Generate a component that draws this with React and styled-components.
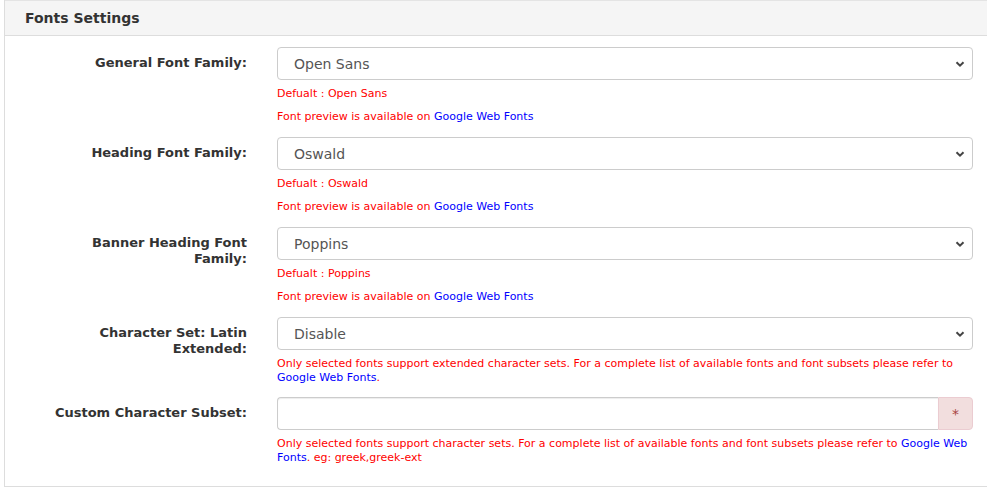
import React from 'react';
import styled, { createGlobalStyle } from 'styled-components';

const GlobalStyle = createGlobalStyle`
  html, body {
    margin: 0;
    padding: 0;
    background: #fff;
    font-family: "DejaVu Sans", Verdana, sans-serif;
  }
`;

const Page = styled.div`
  padding: 0 0 0 4px;
`;

const Panel = styled.div`
  border: 1px solid #ddd;
  border-right: none;
  border-top: none;
  height: 487px;
  box-sizing: border-box;
`;

const PanelHeading = styled.div`
  background: #f5f5f5;
  border-bottom: 1px solid #ddd;
  border-top: 1px solid #e4e4e4;
  height: 36px;
  box-sizing: border-box;
  padding: 0 20px;
  display: flex;
  align-items: center;
  font-size: 14px;
  font-weight: bold;
  color: #333;
`;

const PanelBody = styled.div`
  padding: 11px 14px 0 0;
`;

const Row = styled.div`
  display: grid;
  grid-template-columns: 242px 1fr;
  column-gap: 30px;
  margin-bottom: ${p => p.$gap || 13}px;
`;

const Label = styled.label`
  text-align: right;
  font-size: 13px;
  font-weight: bold;
  color: #333;
  line-height: 16px;
  padding: 8px 0 0 40px;
`;

const Field = styled.div`
  display: flex;
  flex-direction: column;
`;

const Select = styled.div`
  height: 33px;
  box-sizing: border-box;
  border: 1px solid #ccc;
  border-radius: 4px;
  display: flex;
  align-items: center;
  justify-content: space-between;
  padding: 0 6px 0 16px;
  font-size: 14px;
  color: #555;
`;

const InputGroup = styled.div`
  display: flex;
  height: 33px;
`;

const Input = styled.div`
  flex: 1;
  border: 1px solid #ccc;
  border-right: none;
  border-radius: 4px 0 0 4px;
  box-shadow: inset 0 1px 1px rgba(0, 0, 0, 0.075);
`;

const Addon = styled.div`
  width: 35px;
  box-sizing: border-box;
  background: #f2dede;
  border: 1px solid #ebccd1;
  border-radius: 0 4px 4px 0;
  color: #a94442;
  font-size: 14px;
  display: flex;
  align-items: center;
  justify-content: center;
`;

const Help = styled.p`
  margin: ${p => p.$top || 7}px 0 0;
  font-size: 11px;
  line-height: 14px;
  color: #f00;
`;

const Link = styled.a`
  color: #00f;
  text-decoration: none;
`;

const Chevron = () => (
  <svg width="12" height="12" viewBox="0 0 12 12">
    <path d="M2.5 4.2 L6 7.7 L9.5 4.2" fill="none" stroke="#444" strokeWidth="2" />
  </svg>
);

const fonts = [
  { label: 'General Font Family:', value: 'Open Sans' },
  { label: 'Heading Font Family:', value: 'Oswald' },
  { label: 'Banner Heading Font Family:', value: 'Poppins' },
];

const App = () => (
  <>
    <GlobalStyle />
    <Page>
      <Panel>
        <PanelHeading>Fonts Settings</PanelHeading>
        <PanelBody>
          {fonts.map(f => (
            <Row key={f.label}>
              <Label>{f.label}</Label>
              <Field>
                <Select>
                  {f.value}
                  <Chevron />
                </Select>
                <Help>Defualt : {f.value}</Help>
                <Help $top={9}>
                  Font preview is available on <Link>Google Web Fonts</Link>
                </Help>
              </Field>
            </Row>
          ))}
          <Row $gap={12}>
            <Label>Character Set: Latin Extended:</Label>
            <Field>
              <Select>
                Disable
                <Chevron />
              </Select>
              <Help>
                Only selected fonts support extended character sets. For a complete list of available fonts and font subsets please refer to{' '}
                <Link>Google Web Fonts</Link>.
              </Help>
            </Field>
          </Row>
          <Row>
            <Label>Custom Character Subset:</Label>
            <Field>
              <InputGroup>
                <Input />
                <Addon>*</Addon>
              </InputGroup>
              <Help>
                Only selected fonts support character sets. For a complete list of available fonts and font subsets please refer to{' '}
                <Link>Google Web Fonts</Link>. eg: greek,greek-ext
              </Help>
            </Field>
          </Row>
        </PanelBody>
      </Panel>
    </Page>
  </>
);

export default App;
